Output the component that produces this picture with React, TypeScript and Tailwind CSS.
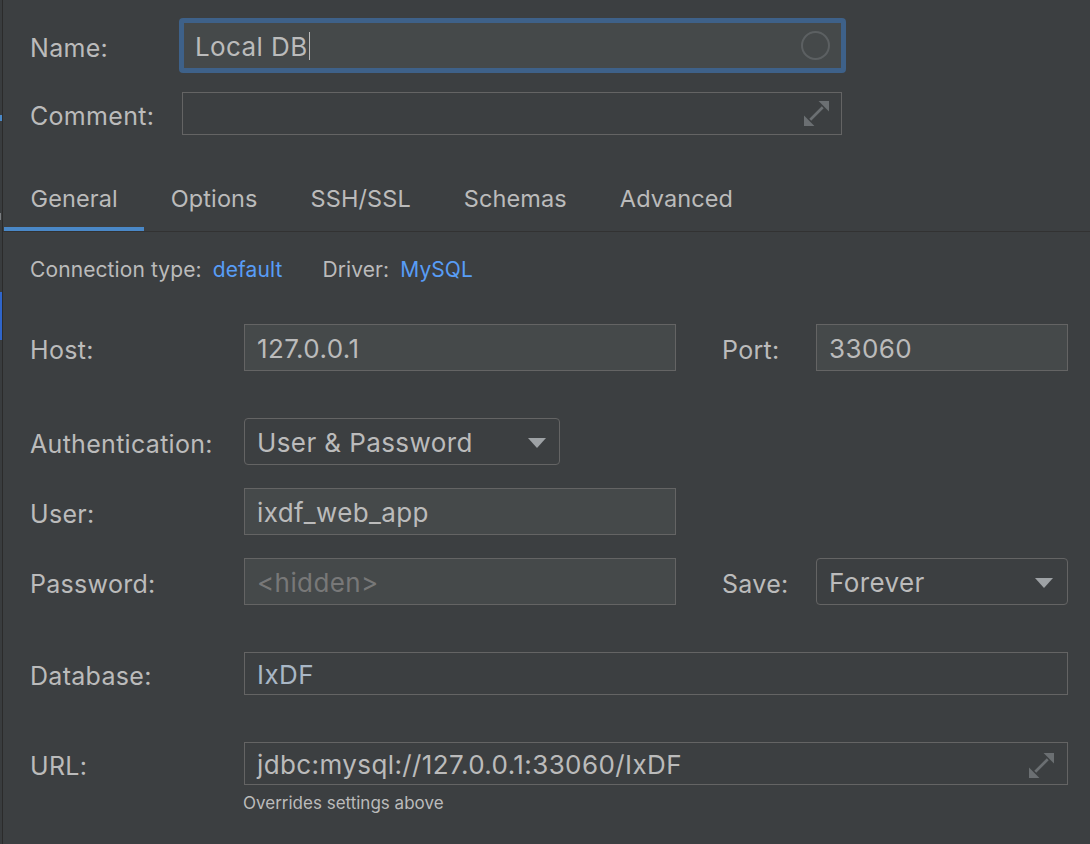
import React from 'react';

const FONT = { fontFamily: 'Inter, "Open Sans", sans-serif' };

const ExpandIcon = () => (
  <svg width="25" height="25" viewBox="0 0 24 24" className="shrink-0">
    <polygon points="14,0 24,0 24,10" fill="#6b6f72" />
    <polygon points="0,14 0,24 10,24" fill="#6b6f72" />
    <line x1="18" y1="6" x2="6" y2="18" stroke="#6b6f72" strokeWidth="2.6" />
  </svg>
);

const Caret = () => (
  <svg width="18" height="10" viewBox="0 0 18 10" className="shrink-0">
    <polygon points="0,0 18,0 9,10" fill="#9ea2a5" />
  </svg>
);

const Label = ({ children, w }: { children: React.ReactNode; w: string }) => (
  <div className={`${w} shrink-0 pt-[4px] text-[25px] tracking-[0.3px] leading-[28px] text-[#bbbbbb]`}>{children}</div>
);

const TABS = ['General', 'Options', 'SSH/SSL', 'Schemas', 'Advanced'];

const field = 'flex items-center pl-[12px] pt-[3px] text-[26px] tracking-[0.4px] leading-[30px]';

export default function App() {
  return (
    <div className="w-[1090px] h-[844px] bg-[#3c3f41] flex overflow-hidden" style={FONT}>
      {/* left window edge */}
      <div className="w-[3px] shrink-0 flex">
        <div className="w-[2px] bg-[#393c3e] flex flex-col">
          <div className="h-[115px]" />
          <div className="h-[6px] bg-[#4a88c7]" />
          <div className="h-[92px]" />
          <div className="h-[7px] w-[1px] bg-[#7a7d80]" />
          <div className="h-[72px]" />
          <div className="h-[48px] bg-[#2f65ca]" />
        </div>
        <div className="w-[1px] bg-[#2b2b2b]" />
      </div>

      <div className="flex-1 flex flex-col">
        {/* name + comment */}
        <div className="pl-[27px] pt-[18px]">
          <div className="flex items-center">
            <Label w="w-[149px]">Name:</Label>
            <div className="w-[667px] h-[55px] rounded-[4px] border-[5px] border-[#3e6189] bg-[#45494a] flex items-center pl-[11px] pr-[11px]">
              <span className="pt-[3px] text-[26px] tracking-[0.4px] leading-[30px] text-[#bbbbbb]">Local DB</span>
              <span className="w-[1px] h-[28px] bg-[#bbbbbb] ml-[1px]" />
              <div className="flex-1" />
              <div className="w-[29px] h-[29px] rounded-full border-2 border-[#5c6062]" />
            </div>
          </div>
          <div className="flex items-center mt-[19px]">
            <Label w="w-[152px]">Comment:</Label>
            <div className="w-[660px] h-[43px] border border-[#646464] flex items-center justify-end pr-[12px]">
              <ExpandIcon />
            </div>
          </div>
        </div>

        {/* tabs */}
        <div className="h-[97px] flex items-end border-b border-[#323232] pl-[1px]">
          {TABS.map((t, i) => (
            <div key={t} className="flex flex-col">
              <div className="px-[26.5px] pb-[14px] pt-[2px] text-[23.5px] tracking-[0.1px] leading-[28px] text-[#bbbbbb]">{t}</div>
              <div className={`h-[4px] ${i === 0 ? 'bg-[#4a88c7]' : ''}`} />
            </div>
          ))}
        </div>

        <div className="pl-[27px]">
          {/* connection type */}
          <div className="flex items-center mt-[21px] pt-[3px] text-[21px] tracking-[0.1px] leading-[28px]">
            <span className="text-[#bbbbbb]">Connection type:</span>
            <span className="text-[#589df6] ml-[11px]">default</span>
            <span className="text-[#bbbbbb] ml-[40px]">Driver:</span>
            <span className="text-[#589df6] ml-[11px]">MySQL</span>
          </div>

          {/* host / port */}
          <div className="flex items-center mt-[40px]">
            <Label w="w-[214px]">Host:</Label>
            <div className={`w-[432px] h-[47px] bg-[#45494a] border border-[#646464] text-[#bbbbbb] ${field}`}>
              127.0.0.1
            </div>
            <div className="w-[46px]" />
            <Label w="w-[94px]">Port:</Label>
            <div className={`w-[252px] h-[47px] bg-[#45494a] border border-[#646464] text-[#bbbbbb] ${field}`}>
              33060
            </div>
          </div>

          {/* authentication */}
          <div className="flex items-center mt-[47px]">
            <Label w="w-[214px]">Authentication:</Label>
            <div className={`w-[316px] h-[47px] rounded-[4px] border border-[#646464] pr-[13px] text-[#bbbbbb] ${field}`}>
              <span className="flex-1">User &amp; Password</span>
              <Caret />
            </div>
          </div>

          {/* user */}
          <div className="flex items-center mt-[23px]">
            <Label w="w-[214px]">User:</Label>
            <div className={`w-[432px] h-[47px] bg-[#45494a] border border-[#646464] text-[#bbbbbb] ${field}`}>
              ixdf_web_app
            </div>
          </div>

          {/* password / save */}
          <div className="flex items-center mt-[23px]">
            <Label w="w-[214px]">Password:</Label>
            <div className={`w-[432px] h-[47px] bg-[#45494a] border border-[#646464] text-[#787878] ${field}`}>
              &lt;hidden&gt;
            </div>
            <div className="w-[46px]" />
            <Label w="w-[94px]">Save:</Label>
            <div className={`w-[252px] h-[47px] rounded-[4px] border border-[#646464] pr-[14px] text-[#bbbbbb] ${field}`}>
              <span className="flex-1">Forever</span>
              <Caret />
            </div>
          </div>

          {/* database */}
          <div className="flex items-center mt-[47px]">
            <Label w="w-[214px]">Database:</Label>
            <div className={`w-[824px] h-[43px] border border-[#646464] text-[#a9b7c6] ${field}`}>
              IxDF
            </div>
          </div>

          {/* url */}
          <div className="flex items-center mt-[47px]">
            <Label w="w-[214px]">URL:</Label>
            <div className={`w-[824px] h-[43px] border border-[#646464] pr-[13px] text-[#bbbbbb] ${field}`}>
              <span className="flex-1">jdbc:mysql://127.0.0.1:33060/IxDF</span>
              <ExpandIcon />
            </div>
          </div>
          <div className="ml-[213px] mt-[8px] text-[17px] leading-[20px] text-[#bbbbbb]">Overrides settings above</div>
        </div>
      </div>
    </div>
  );
}
